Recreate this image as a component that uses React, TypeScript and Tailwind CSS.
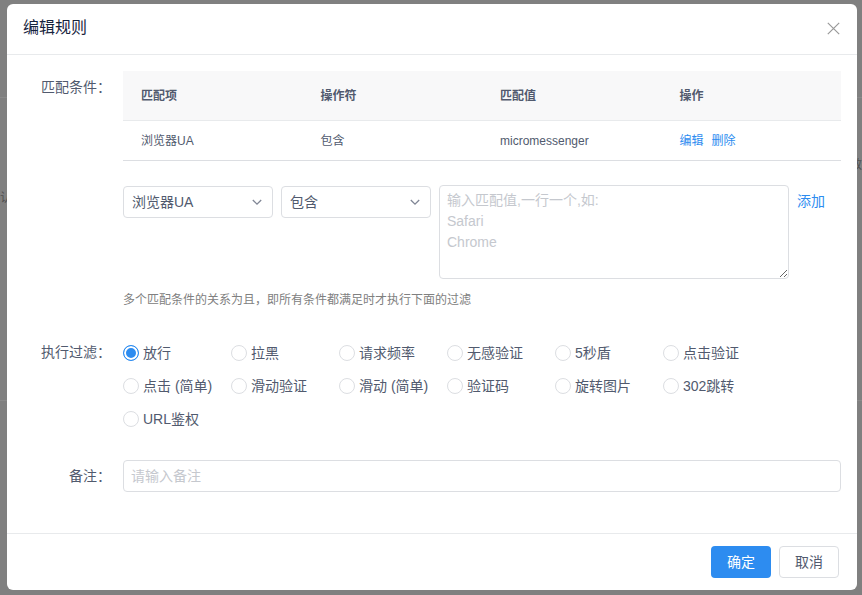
import React, { useState } from 'react';

const conditions = [{ item: '浏览器UA', operator: '包含', value: 'micromessenger' }];

const filters = [
  '放行',
  '拉黑',
  '请求频率',
  '无感验证',
  '5秒盾',
  '点击验证',
  '点击 (简单)',
  '滑动验证',
  '滑动 (简单)',
  '验证码',
  '旋转图片',
  '302跳转',
  'URL鉴权',
];

const labelClass = 'w-[100px] shrink-0 pr-3 text-right leading-8';

const ChevronIcon: React.FC = () => (
  <svg
    className="pointer-events-none absolute top-[11px] right-[11px]"
    width="10"
    height="10"
    viewBox="0 0 10 10"
    fill="none"
    stroke="#808695"
    strokeWidth="1.3"
  >
    <path d="M0.8 3 L5 7.2 L9.2 3" />
  </svg>
);

const CloseIcon: React.FC = () => (
  <svg width="13" height="13" viewBox="0 0 13 13" fill="none" stroke="#999" strokeWidth="1.2">
    <path d="M0.8 0.8 L12.2 12.2 M12.2 0.8 L0.8 12.2" />
  </svg>
);

const Select: React.FC<{ label: string; options: string[] }> = ({ label, options }) => (
  <div className="relative mt-px w-[150px]">
    <select
      aria-label={label}
      className="block h-8 w-full appearance-none rounded border border-[#dcdee2] bg-white pr-6 pl-2 outline-none"
    >
      {options.map((option) => (
        <option key={option}>{option}</option>
      ))}
    </select>
    <ChevronIcon />
  </div>
);

// Page underneath the mask, only its edges show around the dialog
const Backdrop: React.FC = () => (
  <div className="absolute inset-0 overflow-hidden text-xs text-[#505050]" aria-hidden="true">
    <div className="absolute inset-x-0 top-[97px] h-[304px] border-y border-[#8a8a8a]" />
    <span className="absolute top-[190px] left-0">认</span>
    <span className="absolute top-[157px] right-0">效</span>
  </div>
);

const App: React.FC = () => {
  const [filter, setFilter] = useState('放行');

  return (
    <div className="relative min-h-screen bg-[#808080] pt-1 pr-[5px] pb-[5px] pl-[7px] font-['Liberation_Sans','Noto_Sans_CJK_SC',sans-serif] text-sm text-[#515a6e]">
      <Backdrop />
      <div role="dialog" aria-labelledby="dialog-title" className="relative rounded-md bg-white">
        <header className="flex h-[51px] items-center justify-between border-b border-[#e8eaec] pr-[17px] pb-0.5 pl-4">
          <h2 id="dialog-title" className="text-base leading-5 text-[#17233d]">编辑规则</h2>
          <button type="button" aria-label="关闭">
            <CloseIcon />
          </button>
        </header>

        <form className="px-4 pt-4 pb-[41px]">
          <div className="flex">
            <div className={labelClass}>匹配条件：</div>
            <div className="min-w-0 flex-1">
              <table className="w-full table-fixed border-separate border-spacing-0 text-left text-xs">
                <thead>
                  <tr className="bg-[#f8f8f9]">
                    <th className="h-[50px] border-b border-[#e8eaec] px-[18px] font-bold">匹配项</th>
                    <th className="h-[50px] border-b border-[#e8eaec] px-[18px] font-bold">操作符</th>
                    <th className="h-[50px] border-b border-[#e8eaec] px-[18px] font-bold">匹配值</th>
                    <th className="h-[50px] border-b border-[#e8eaec] px-[18px] font-bold">操作</th>
                  </tr>
                </thead>
                <tbody>
                  {conditions.map((row) => (
                    <tr key={row.value}>
                      <td className="h-10 border-b border-[#dcdee2] px-[18px]">{row.item}</td>
                      <td className="h-10 border-b border-[#dcdee2] px-[18px]">{row.operator}</td>
                      <td className="h-10 border-b border-[#dcdee2] px-[18px]">{row.value}</td>
                      <td className="h-10 border-b border-[#dcdee2] px-[18px] text-[#2d8cf0]">
                        <a href="#edit">编辑</a>
                        <a href="#delete" className="ml-2">删除</a>
                      </td>
                    </tr>
                  ))}
                </tbody>
              </table>

              <div className="mt-6 flex items-start gap-2">
                <Select label="匹配项" options={['浏览器UA']} />
                <Select label="操作符" options={['包含']} />
                <textarea
                  aria-label="匹配值"
                  rows={4}
                  placeholder={'输入匹配值,一行一个,如:\nSafari\nChrome'}
                  className="h-[94px] w-[350px] resize rounded border border-[#dcdee2] px-[7px] py-1 leading-[21px] outline-none placeholder:text-[#c5c8ce]"
                />
                <a href="#add" className="leading-8 text-[#2d8cf0]">添加</a>
              </div>
              <p className="mt-3 text-xs leading-[18px] text-[#808080]">
                多个匹配条件的关系为且，即所有条件都满足时才执行下面的过滤
              </p>
            </div>
          </div>

          <div className="mt-[27px] flex">
            <div className={labelClass} id="filter-label">执行过滤：</div>
            <div role="radiogroup" aria-labelledby="filter-label" className="flex flex-1 flex-wrap">
              {filters.map((name) => (
                <label key={name} className="flex h-[33px] w-[108px] items-center gap-1 whitespace-nowrap">
                  <input
                    type="radio"
                    name="filter"
                    checked={filter === name}
                    onChange={() => setFilter(name)}
                    className="size-4 appearance-none rounded-full border border-[#dcdee2] bg-white checked:border-[#2d8cf0] checked:bg-[#2d8cf0] checked:shadow-[inset_0_0_0_2px_#fff]"
                  />
                  {name}
                </label>
              ))}
            </div>
          </div>

          <div className="mt-[25px] flex">
            <label htmlFor="remark" className={labelClass}>备注：</label>
            <input
              id="remark"
              type="text"
              placeholder="请输入备注"
              className="h-8 min-w-0 flex-1 rounded border border-[#dcdee2] px-[7px] outline-none placeholder:text-[#c5c8ce]"
            />
          </div>
        </form>

        <footer className="flex justify-end gap-2 border-t border-[#e8eaec] px-[18px] py-3">
          <button type="button" className="h-8 w-[60px] rounded bg-[#2d8cf0] text-white">确定</button>
          <button type="button" className="h-8 w-[60px] rounded border border-[#dcdee2]">取消</button>
        </footer>
      </div>
    </div>
  );
};

export default App;
